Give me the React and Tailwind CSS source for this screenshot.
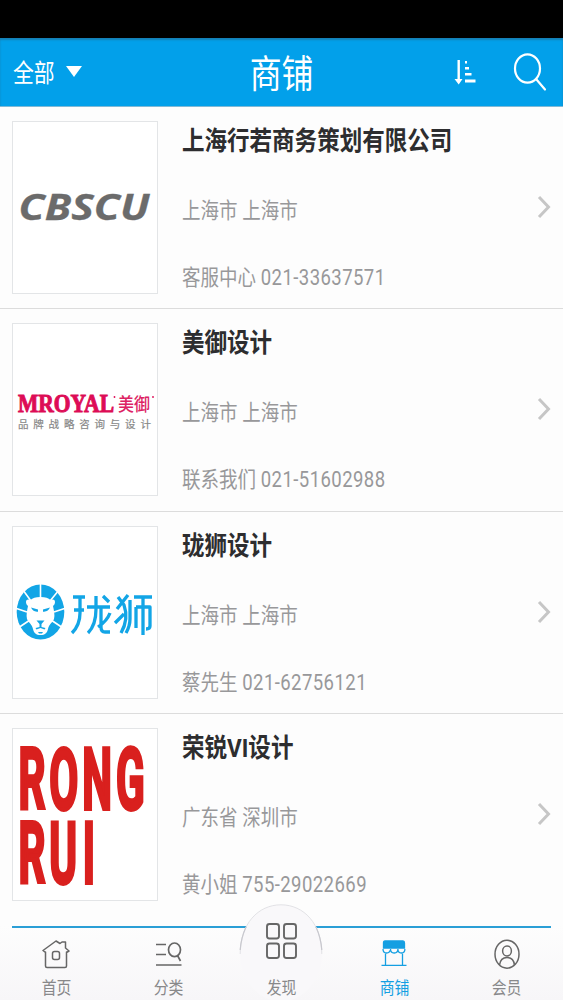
import React from "react";

// Text drawn on a horizontally condensed face.
function Condensed({ className = "", children }) {
  return (
    <span className={`inline-block whitespace-nowrap scale-x-[0.85] ${className}`}>{children}</span>
  );
}

function CbscuLogo() {
  return (
    <svg viewBox="0 0 144 171" className="h-full w-full">
      <text
        transform="translate(5.500 98)"
        fontFamily="'Open Sans', sans-serif"
        fontWeight="700"
        fontStyle="italic"
        fontSize="36"
        textLength="131"
        lengthAdjust="spacingAndGlyphs"
        fill="#6b6b6b"
        stroke="#6b6b6b"
        strokeWidth="0.3"
      >
        CBSCU
      </text>
    </svg>
  );
}

function MroyalLogo() {
  return (
    <svg viewBox="0 0 144 171" className="h-full w-full">
      <text
        x="5"
        y="87.500"
        fontFamily="'Liberation Serif', serif"
        fontWeight="700"
        fontSize="25.500"
        textLength="96"
        lengthAdjust="spacingAndGlyphs"
        fill="#dd0c56"
        stroke="#dd0c56"
        strokeWidth="1"
      >
        MROYAL
      </text>
      <circle cx="101.500" cy="73" r="0.9" fill="#dd0c56" />
      <text
        x="105"
        y="87"
        fontFamily="'Noto Sans CJK SC', sans-serif"
        fontWeight="500"
        fontSize="18.500"
        textLength="32"
        lengthAdjust="spacingAndGlyphs"
        fill="#dd2364"
      >
        美御
      </text>
      <circle cx="140" cy="73" r="0.9" fill="#dd0c56" />
      <text
        x="5"
        y="103.500"
        fontFamily="'Noto Sans CJK SC', sans-serif"
        fontSize="10.500"
        letterSpacing="4.800"
        fill="#888"
        stroke="#888"
        strokeWidth="0.2"
      >
        品牌战略咨询与设计
      </text>
    </svg>
  );
}

function LionLogo() {
  return (
    <svg viewBox="0 0 144 171" className="h-full w-full">
      <ellipse cx="27.500" cy="85" rx="23.800" ry="27.500" fill="#12a5e6" />
      <g stroke="#fff" strokeWidth="1.600">
        <path d="M27.500 72V56M18 74L10 63M37 74L46 63M14 85L2 81M41 85L53 81M17 93L5 101M38 93L50 101" />
      </g>
      <path
        d="M27.500 70c-5 0-8 1-10 3-2-1-4.500-1-4.500 2 0 2 1 3 2 4-1 5-2 9-1 13 1 3 5 5 6 10 1 4 3 6 7.500 6s6.500-2 7.500-6c1-5 5-7 6-10 1-4 0-8-1-13 1-1 2-2 2-4 0-3-2.500-3-4.500-2-2-2-5-3-10-3z"
        fill="#fff"
      />
      <path
        d="M18 80.500l7 2v2.200c-3 0-5-.5-7-4.200zM37 80.500l-7 2v2.200c3 0 5-.5 7-4.200zM23.500 93.500h8l-3 3.500v3l4 1-1 1.500-4-1.500-4 1.500-1-1.500 4-1v-3zM25 105h5l-1 1.500h-3z"
        fill="#12a5e6"
      />
      <g fill="none" stroke="#12a5e6" strokeWidth="3.300" strokeLinejoin="round">
        <path d="M60 70h12M61 83h10M67 70v16q0 12-8 20" />
        <path d="M74 80h23M83 69v13q0 16-8 24M88 80v20q0 5 4 5h5M97 86q-3 8-12 14M90 69l6 6" />
        <path d="M115 68l-11 14M105 70l6 8q5 14-3 28M111 87l-9 9" />
        <path d="M117 73v19q0 7-4 14M121 70h18M130 70v38M123 80v21M123 80h14v19q0 3-4 3" />
      </g>
    </svg>
  );
}

function RongRuiLogo() {
  return (
    <svg viewBox="0 0 144 171" className="h-full w-full overflow-visible">
      <g
        fontFamily="'Roboto', sans-serif"
        fontWeight="700"
        fontSize="86"
        fill="#d9201e"
        stroke="#d9201e"
        strokeWidth="3.800"
      >
        <text transform="translate(5.500 79.500) scale(0.49 1)" x="0 63 130 199" y="0">
          RONG
        </text>
        <text transform="translate(5.500 153.500) scale(0.49 1)" x="0 63 131" y="0">
          RUI
        </text>
      </g>
    </svg>
  );
}

const shops = [
  { name: "上海行若商务策划有限公司", place: "上海市 上海市", contact: "客服中心", phone: "021-33637571", Logo: CbscuLogo },
  { name: "美御设计", place: "上海市 上海市", contact: "联系我们", phone: "021-51602988", Logo: MroyalLogo },
  { name: "珑狮设计", place: "上海市 上海市", contact: "蔡先生", phone: "021-62756121", Logo: LionLogo },
  { name: "荣锐VI设计", place: "广东省 深圳市", contact: "黄小姐", phone: "755-29022669", Logo: RongRuiLogo },
];

function ShopRow({ name, place, contact, phone, Logo }) {
  return (
    <li className="flex h-[202.400px] shrink-0 border-b border-[#dcdcdc] pl-3 pt-[14px] last:border-b-0">
      <div className="h-[173px] w-[146px] shrink-0 border border-[#e3e5e7] bg-white">
        <Logo />
      </div>
      <div className="-mr-2 ml-[24px] flex flex-1 flex-col items-start pt-px">
        <Condensed className="h-[38px] origin-left text-[26.500px] font-bold leading-[38px] text-[#2d2d2f]">{name}</Condensed>
        <Condensed className="mt-8 h-[38px] origin-left text-[21.800px] leading-[38px] text-[#98989a]">{place}</Condensed>
        <Condensed className="mt-[29px] h-[38px] origin-left text-[21.800px] leading-[38px] text-[#98989a]">
          {contact} <span className="tracking-[0.5px]">{phone}</span>
        </Condensed>
      </div>
      <svg viewBox="0 0 14 24" className="mr-3 mt-[74px] h-6 w-[14px]" fill="none" stroke="#c6c6c6" strokeWidth="3">
        <path d="M2 2l9.500 10L2 22" />
      </svg>
    </li>
  );
}

function HomeIcon() {
  return (
    <svg viewBox="0 0 28 30" className="h-[30px] w-7" fill="none" stroke="#666" strokeWidth="1.500" strokeLinejoin="round" strokeLinecap="round">
      <path d="M3.500 13v14q0 1.500 1.500 1.500h18q1.500 0 1.500-1.500V13M3.500 13.500l-2.500-2L14 2l4 2.500 2-1.500h3.500v6l3.500 3-2.500 1.500" />
      <rect x="10.500" y="12.500" width="7" height="8" rx="2" />
    </svg>
  );
}

function CategoryIcon() {
  return (
    <svg viewBox="0 0 28 30" className="h-[30px] w-7" fill="none" stroke="#666" strokeWidth="1.700">
      <path d="M1 5.500h10M1 15.500h10M1 26h25.500M22.500 16.500l3 5.500" />
      <ellipse cx="19.500" cy="10.800" rx="6" ry="6.800" />
    </svg>
  );
}

function StoreIcon() {
  return (
    <svg viewBox="0 0 28 30" className="h-[30px] w-7" fill="none" stroke="#149fe2" strokeWidth="1.300">
      <path d="M5 2h18q1.500 0 1.500 2v5h-21V4Q3.500 2 5 2z" fill="#149fe2" />
      <path d="M3 10q0 4 3.500 4t4-4q0 4 3.700 4t3.700-4q0 4 3.500 4t3.500-4M5.500 14v12M22.500 14v12M1.500 26.300h25" />
    </svg>
  );
}

function MemberIcon() {
  return (
    <svg viewBox="0 0 28 30" className="h-[30px] w-7" fill="none" stroke="#666" strokeWidth="1.500">
      <ellipse cx="14" cy="15.200" rx="12" ry="14" />
      <ellipse cx="14" cy="12" rx="4.400" ry="5" />
      <path d="M6.500 26q1-7.500 7.500-7.500t7.500 7.500" />
    </svg>
  );
}

function Tab({ label, active, children }) {
  return (
    <div className="flex flex-1 flex-col items-center pt-[11px]">
      {children}
      <Condensed className={`mt-[7px] h-6 text-[17.500px] leading-6 ${active ? "text-[#149fe2]" : "text-[#88888a]"}`}>{label}</Condensed>
    </div>
  );
}

export default function App() {
  return (
    <div className="flex h-[1000px] w-[563px] flex-col overflow-hidden bg-[#fdfdfd] font-['Roboto','Noto_Sans_CJK_SC',sans-serif]">
      <div className="h-[38px] shrink-0 bg-black" />
      <header className="flex h-[69px] shrink-0 items-center border-b border-[#7fb9d6] bg-[#02a0ea] text-white shadow-[inset_0_2px_2px_#1580b5]">
        <div className="flex w-[188px] items-center pl-[13px]">
          <div className="w-[43px]">
            <Condensed className="mt-[3px] origin-left text-[24.500px] leading-9">全部</Condensed>
          </div>
          <svg viewBox="0 0 16 11" className="ml-[10px] h-[11px] w-4 -translate-y-px" fill="#fff">
            <path d="M0 0h16L8 11z" />
          </svg>
        </div>
        <h1 className="flex-1 text-center">
          <Condensed className="mt-[4px] text-[37.500px] leading-[56px]">商铺</Condensed>
        </h1>
        <div className="flex w-[188px] items-center justify-end pr-4">
          <svg viewBox="0 0 22 26" className="mr-[37px] h-[26px] w-[22px]" fill="#fff">
            <path d="M3.500 1h2.400v19h2.600l-3.800 5.500L.5 20h3zM11 2h2v2.500h-2zM11 8h4v2.500h-4zM11 14h6.500v2.500H11zM11 20.500h10.500v3H11z" />
          </svg>
          <svg viewBox="0 0 34 40" className="h-10 w-[34px]" fill="none" stroke="#fff" strokeWidth="2.200" strokeLinecap="round">
            <ellipse cx="14.500" cy="16.500" rx="12.500" ry="14.200" />
            <path d="M23.500 27.500L32 37.500" />
          </svg>
        </div>
      </header>
      <ul className="flex h-[819px] shrink-0 flex-col overflow-hidden">
        {shops.map((shop) => (
          <ShopRow key={shop.name} {...shop} />
        ))}
      </ul>
      <nav className="relative h-[74px] shrink-0 bg-linear-to-b from-[#fdfdfd] to-[#f7f6f8]">
        <div className="mx-3 h-[2px] bg-[#2b9fd6]" />
        <svg viewBox="0 0 86 96" className="absolute left-[238px] top-[-22px] h-24 w-[86px]">
          <ellipse cx="43" cy="49" rx="41" ry="48.500" fill="#f9f8fa" />
          <path d="M2.200 50C2.200 20 20 .8 43 .8S83.800 20 83.800 50" fill="none" stroke="#e2e2e6" strokeWidth="1" />
          <path d="M2.200 46Q3 34 8 23M83.800 46Q83 34 78 23" fill="none" stroke="#c8c8ce" strokeWidth="1.200" />
        </svg>
        <div className="relative flex">
          <Tab label="首页"><HomeIcon /></Tab>
          <Tab label="分类"><CategoryIcon /></Tab>
          <Tab label="发现">
            <svg viewBox="0 0 32 38" className="-mt-[17px] mb-[9px] h-[38px] w-8" fill="none" stroke="#666" strokeWidth="1.900">
              <rect x="2" y="2" width="12" height="14.500" rx="2.500" />
              <rect x="19" y="2" width="12" height="14.500" rx="2.500" />
              <rect x="2" y="21.500" width="12" height="14.500" rx="2.500" />
              <rect x="19" y="21.500" width="12" height="14.500" rx="2.500" />
            </svg>
          </Tab>
          <Tab label="商铺" active><StoreIcon /></Tab>
          <Tab label="会员"><MemberIcon /></Tab>
        </div>
      </nav>
    </div>
  );
}
